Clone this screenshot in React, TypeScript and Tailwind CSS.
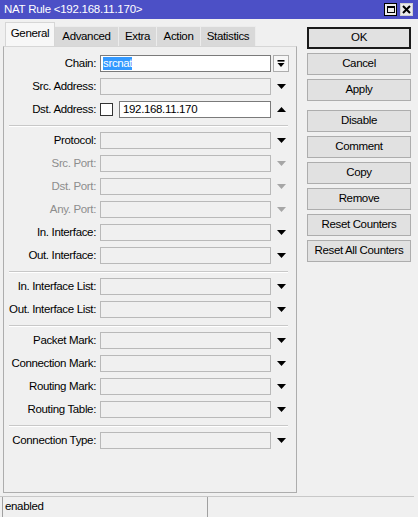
import React from "react";

type Field = {
  label: string;
  muted?: boolean;
};

const groups: Field[][] = [
  [
    { label: "Protocol:" },
    { label: "Src. Port:", muted: true },
    { label: "Dst. Port:", muted: true },
    { label: "Any. Port:", muted: true },
    { label: "In. Interface:" },
    { label: "Out. Interface:" },
  ],
  [{ label: "In. Interface List:" }, { label: "Out. Interface List:" }],
  [
    { label: "Packet Mark:" },
    { label: "Connection Mark:" },
    { label: "Routing Mark:" },
    { label: "Routing Table:" },
  ],
  [{ label: "Connection Type:" }],
];

const buttons = [
  "Disable",
  "Comment",
  "Copy",
  "Remove",
  "Reset Counters",
  "Reset All Counters",
];

function DownArrow({ muted }: { muted?: boolean }) {
  return (
    <svg width="9" height="5" viewBox="0 0 9 5">
      <polygon points="0,0 9,0 4.5,5" fill={muted ? "#a6a6a6" : "#000"} />
    </svg>
  );
}

function Separator() {
  return (
    <div className="h-[8px] pt-[4px] pl-[5px]">
      <div className="h-[2px] w-[279px] border-t border-b border-t-[#c8c8c8] border-b-white" />
    </div>
  );
}

function Row({ label, muted, children }: { label: string; muted?: boolean; children: React.ReactNode }) {
  return (
    <div className="flex h-[23px] items-center">
      <div className={`w-[92px] text-right whitespace-nowrap ${muted ? "text-[#8d8d8d]" : "text-black"}`}>
        {label}
      </div>
      <div className="ml-[4px] flex items-center">{children}</div>
    </div>
  );
}

function EmptyBox() {
  return <div className="h-[17px] w-[171px] border border-[#b9b9b9] bg-[#f0f0f0]" />;
}

function ArrowSlot({ children }: { children?: React.ReactNode }) {
  return <div className="ml-[2px] flex h-[17px] w-[16px] items-center justify-center">{children}</div>;
}

export default function App() {
  return (
    <div className="relative h-[517px] w-[418px] overflow-hidden bg-[#f0f0f0] font-['Liberation_Sans',Arial,sans-serif] text-[11.5px] tracking-[-0.35px] text-black">
      {/* title bar */}
      <div className="flex h-[19px] items-center justify-between bg-[#4c50c6] pl-[4px] pr-[5px]">
        <span className="text-[11.5px] tracking-[-0.25px] text-white">NAT Rule &lt;192.168.11.170&gt;</span>
        <div className="flex gap-[3px]">
          <div className="flex h-[13px] w-[13px] items-center justify-center border border-black bg-[#ececec]">
            <div className="h-[7px] w-[8px] border border-t-2 border-black" />
          </div>
          <div className="flex h-[13px] w-[13px] items-center justify-center border border-[#d0d0d0] bg-[#ececec]">
            <svg width="9" height="9" viewBox="0 0 9 9">
              <path d="M1 1 L8 8 M8 1 L1 8" stroke="#000" strokeWidth="2" />
            </svg>
          </div>
        </div>
      </div>

      <div className="flex items-start">
        {/* left: tabs + panel */}
        <div className="ml-[3px] mt-[3px] w-[294px]">
          <div className="flex h-[24px] items-end pl-[2px]">
            <div className="flex h-[24px] w-[50px] items-center justify-center border border-b-0 border-[#d6d6d6] bg-[#f7f7f7] pb-[1px]">
              General
            </div>
            <div className="flex h-[20px] w-[64px] items-center justify-center border-t border-r border-[#ececec] bg-[#d9d9d9]">
              Advanced
            </div>
            <div className="flex h-[20px] w-[38px] items-center justify-center border-t border-r border-[#ececec] bg-[#d9d9d9]">
              Extra
            </div>
            <div className="flex h-[20px] w-[44px] items-center justify-center border-t border-r border-[#ececec] bg-[#d9d9d9]">
              Action
            </div>
            <div className="flex h-[20px] w-[55px] items-center justify-center border-t border-r border-[#ececec] bg-[#d9d9d9]">
              Statistics
            </div>
          </div>

          <div className="h-[447px] border border-[#adadad] border-t-[#d6d6d6] pt-[5px]">
            <Row label="Chain:">
              <div className="flex h-[17px] w-[171px] items-center border border-[#7a7a7a] bg-white pl-[2px]">
                <span className="bg-[#3399ff] leading-[13px] text-white">srcnat</span>
              </div>
              <div className="ml-[2px] flex h-[17px] w-[16px] items-center justify-center border border-[#adadad] bg-[#f7f7f7]">
                <svg width="8" height="8" viewBox="0 0 8 8">
                  <rect x="0.5" y="0" width="7" height="1.6" fill="#000" />
                  <polygon points="0.5,3 7.5,3 4,7" fill="#000" />
                </svg>
              </div>
            </Row>
            <Row label="Src. Address:">
              <EmptyBox />
              <ArrowSlot>
                <DownArrow />
              </ArrowSlot>
            </Row>
            <Row label="Dst. Address:">
              <div className="h-[13px] w-[13px] border border-[#333] bg-white" />
              <div className="ml-[6px] flex h-[17px] w-[152px] items-center border border-[#7a7a7a] bg-white pl-[3px]">
                192.168.11.170
              </div>
              <ArrowSlot>
                <svg width="9" height="5" viewBox="0 0 9 5">
                  <polygon points="0,5 9,5 4.5,0" fill="#000" />
                </svg>
              </ArrowSlot>
            </Row>

            {groups.map((group, gi) => (
              <div key={gi}>
                <Separator />
                {group.map((f) => (
                  <Row key={f.label} label={f.label} muted={f.muted}>
                    <EmptyBox />
                    <ArrowSlot>
                      <DownArrow muted={f.muted} />
                    </ArrowSlot>
                  </Row>
                ))}
              </div>
            ))}
          </div>
        </div>

        {/* right: action buttons */}
        <div className="ml-[10px] mt-[8px] flex w-[104px] flex-col">
          <div className="flex h-[22px] items-center justify-center border-2 border-[#1a1a1a] bg-[#e1e1e1]">OK</div>
          <div className="mt-[4px] flex h-[22px] items-center justify-center border border-[#adadad] bg-[#e1e1e1]">Cancel</div>
          <div className="mt-[4px] flex h-[22px] items-center justify-center border border-[#adadad] bg-[#e1e1e1]">Apply</div>
          <div className="mt-[9px] flex flex-col gap-[4px]">
            {buttons.map((b) => (
              <div key={b} className="flex h-[22px] items-center justify-center border border-[#adadad] bg-[#e1e1e1]">
                {b}
              </div>
            ))}
          </div>
        </div>
      </div>

      {/* status bar */}
      <div className="mt-[3px] flex h-[21px] w-[414px] border-t border-[#c8c8c8]">
        <div className="ml-[2px] flex w-[202px] items-center border-l border-[#a0a0a0] pl-[2px]">enabled</div>
        <div className="ml-[3px] flex-1 border-l border-[#a0a0a0]" />
      </div>
    </div>
  );
}
